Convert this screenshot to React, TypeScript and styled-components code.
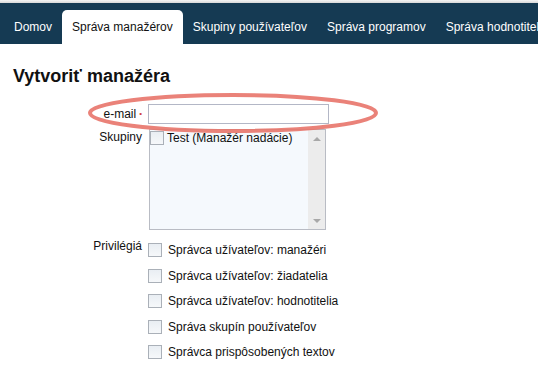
import styled, { createGlobalStyle } from "styled-components";

const GlobalStyle = createGlobalStyle`
  html, body {
    margin: 0;
    padding: 0;
    background: #ffffff;
    font-family: "Liberation Sans", Arial, sans-serif;
    color: #111;
  }
`;

const TopStrip = styled.div`
  height: 3px;
  background: linear-gradient(#f4f4f4, #d8d8d8);
`;

const Nav = styled.nav`
  display: flex;
  align-items: flex-end;
  height: 41px;
  padding-left: 4px;
  background: #153a53;
  overflow: hidden;
  white-space: nowrap;
`;

const Tab = styled.div<{ $active?: boolean }>`
  flex: none;
  height: 34px;
  line-height: 34px;
  padding: 0 10px;
  font-size: 12px;
  border-radius: 5px 5px 0 0;
  color: ${(p) => (p.$active ? "#111" : "#ffffff")};
  background: ${(p) => (p.$active ? "#ffffff" : "transparent")};
`;

const Content = styled.div`
  padding: 0 0 0 13px;
`;

const Title = styled.h1`
  margin: 22px 0 17px;
  font-size: 18px;
  line-height: 21px;
  font-weight: bold;
`;

const Form = styled.div`
  display: grid;
  grid-template-columns: 129px 1fr;
  column-gap: 6px;
  row-gap: 5px;
  font-size: 12px;
  line-height: 14px;
`;

const Label = styled.div<{ $pt?: number }>`
  text-align: right;
  padding-top: ${(p) => p.$pt ?? 0}px;
`;

const Required = styled.span`
  color: #d04040;
  font-size: 8px;
  margin-left: 3px;
  vertical-align: 2px;
`;

const FieldCell = styled.div`
  position: relative;
`;

const TextInput = styled.div`
  width: 179px;
  height: 18px;
  border: 1px solid #b3b7c6;
  background: #fff;
`;

const Highlight = styled.svg`
  position: absolute;
  left: -65px;
  top: -13px;
  pointer-events: none;
`;

const ListBox = styled.div`
  display: flex;
  width: 175px;
  height: 99px;
  margin-left: 1px;
  border: 1px solid #b9bcc4;
  background: #f5f9fd;
`;

const ListItems = styled.div`
  flex: 1;
`;

const Option = styled.label`
  display: flex;
  align-items: center;
  gap: 3px;
  height: 15px;
`;

const Scrollbar = styled.div`
  width: 17px;
  background: #ececec;
  display: flex;
  flex-direction: column;
  justify-content: space-between;
  align-items: center;
  padding: 7px 0 6px;
`;

const Arrow = styled.div<{ $down?: boolean }>`
  width: 0;
  height: 0;
  border-left: 4px solid transparent;
  border-right: 4px solid transparent;
  ${(p) =>
    p.$down
      ? "border-top: 4px solid #a8a8a8;"
      : "border-bottom: 4px solid #a8a8a8;"}
`;

const Box = styled.span`
  display: inline-block;
  flex: none;
  width: 12px;
  height: 12px;
  border: 1px solid #aab0b8;
  background: linear-gradient(#e9eef3, #f6f8fa);
`;

const PrivList = styled.div`
  display: flex;
  flex-direction: column;
  gap: 11.5px;
  padding-top: 8px;
`;

const PrivItem = styled.label`
  display: flex;
  align-items: center;
  gap: 6px;
  height: 14px;
`;

const privileges = [
  "Správca užívateľov: manažéri",
  "Správca užívateľov: žiadatelia",
  "Správca užívateľov: hodnotitelia",
  "Správa skupín používateľov",
  "Správca prispôsobených textov",
];

const tabs = [
  "Domov",
  "Správa manažérov",
  "Skupiny používateľov",
  "Správa programov",
  "Správa hodnotiteľov",
];

export default function App() {
  return (
    <>
      <GlobalStyle />
      <TopStrip />
      <Nav>
        {tabs.map((t, i) => (
          <Tab key={t} $active={i === 1}>
            {t}
          </Tab>
        ))}
      </Nav>
      <Content>
        <Title>Vytvoriť manažéra</Title>
        <Form>
          <Label $pt={3}>
            e-mail<Required>•</Required>
          </Label>
          <FieldCell>
            <TextInput />
            <Highlight width="300" height="46" viewBox="0 0 300 46">
              <ellipse
                cx="150"
                cy="22"
                rx="143"
                ry="18"
                fill="none"
                stroke="#e8746a"
                strokeOpacity="0.9"
                strokeWidth="4"
              />
            </Highlight>
          </FieldCell>
          <Label $pt={1}>Skupiny</Label>
          <ListBox>
            <ListItems>
              <Option>
                <Box />
                Test (Manažér nadácie)
              </Option>
            </ListItems>
            <Scrollbar>
              <Arrow />
              <Arrow $down />
            </Scrollbar>
          </ListBox>
          <Label $pt={4}>Privilégiá</Label>
          <PrivList>
            {privileges.map((p) => (
              <PrivItem key={p}>
                <Box />
                {p}
              </PrivItem>
            ))}
          </PrivList>
        </Form>
      </Content>
    </>
  );
}
